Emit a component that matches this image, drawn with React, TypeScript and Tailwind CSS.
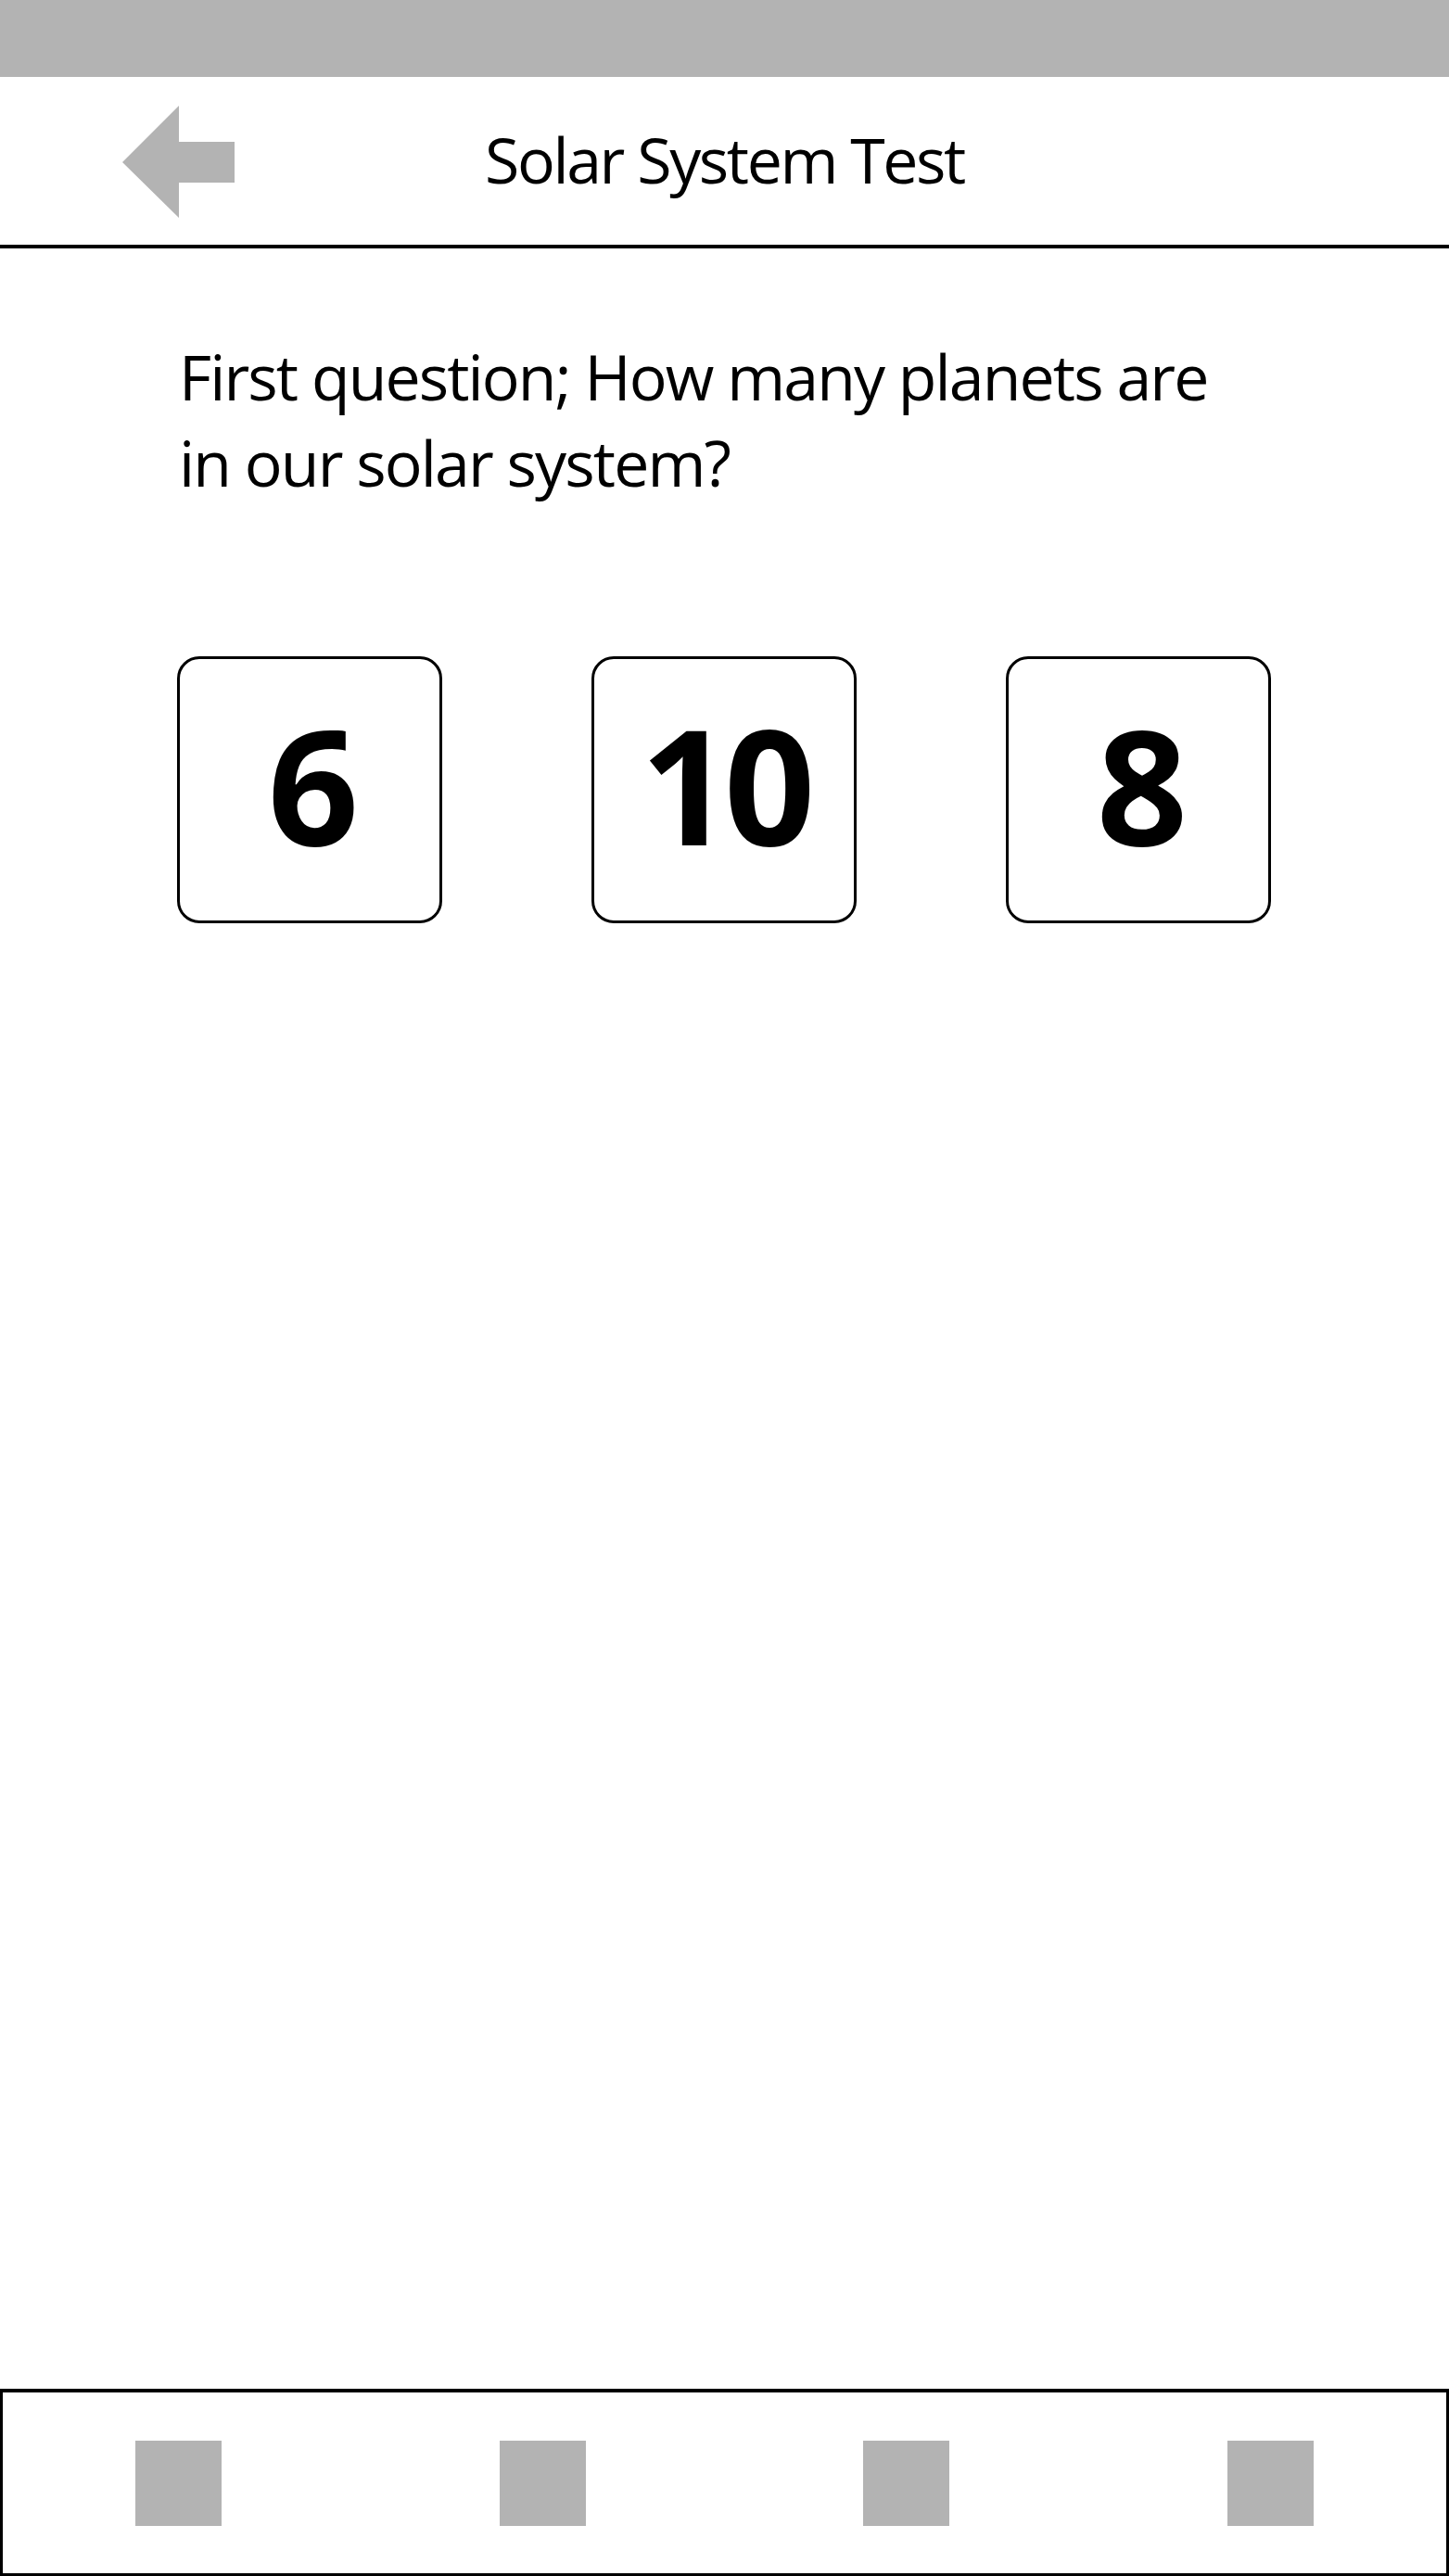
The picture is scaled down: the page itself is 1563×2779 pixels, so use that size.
import React from 'react';

const options = ['6', '10', '8'];

const BackArrow: React.FC = () => (
  <svg width="122" height="122" viewBox="0 0 122 122" className="block">
    <polygon points="0,61 61,0 61,39 121,39 121,83 61,83 61,121" fill="#b3b3b3" />
  </svg>
);

const App: React.FC = () => {
  return (
    <div
      className="min-h-[2779px] w-[1563px] flex flex-col bg-white text-black"
      style={{ fontFamily: '"Open Sans", "Noto Sans", sans-serif' }}
    >
      {/* status bar */}
      <div className="h-[83px] bg-[#b3b3b3]" />

      {/* header */}
      <header className="relative h-[185px] border-b-4 border-black flex items-center justify-center">
        <button className="absolute left-[132px] top-[31px]">
          <BackArrow />
        </button>
        <h1 className="text-[68px] tracking-[-2.4px] leading-none mt-[-4px]">Solar System Test</h1>
      </header>

      {/* question */}
      <main className="flex-1 pl-[191px] pr-[190px]">
        <p className="mt-[91px] pl-[2px] text-[68px] leading-[93px] tracking-[-1.9px] w-[1150px]">
          First question; How many planets are in our solar system?
        </p>

        <div className="mt-[163px] flex gap-[161px]">
          {options.map((opt) => (
            <button
              key={opt}
              className="w-[286px] h-[288px] rounded-[24px] border-[3px] border-black flex items-center justify-center"
            >
              <span className="text-[172px] font-bold leading-none tracking-[-8px] -mt-[14px]">{opt}</span>
            </button>
          ))}
        </div>
      </main>

      {/* bottom nav */}
      <nav className="h-[202px] border-[3px] border-t-4 border-black flex items-center justify-between px-[143px]">
        {[0, 1, 2, 3].map((i) => (
          <div key={i} className="w-[93px] h-[92px] bg-[#b3b3b3]" />
        ))}
      </nav>
    </div>
  );
};

export default App;
